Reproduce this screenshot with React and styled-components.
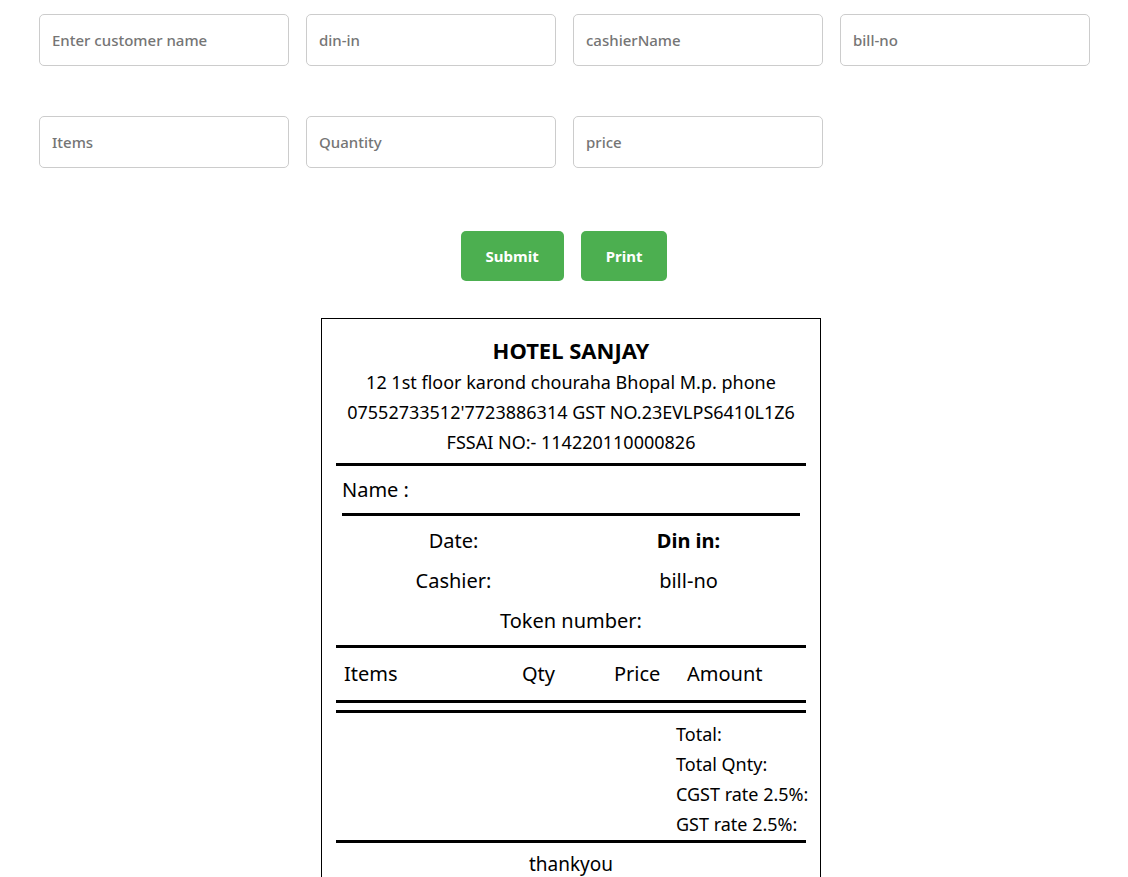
import React from "react";
import styled, { createGlobalStyle } from "styled-components";

const GlobalStyle = createGlobalStyle`
  body {
    margin: 8px;
    font-family: "Noto Sans", "Open Sans", sans-serif;
    background: #fff;
    color: #000;
  }
`;

const Page = styled.div`
  padding-top: 6px;
`;

const FormGrid = styled.div`
  display: grid;
  grid-template-columns: repeat(4, 250px);
  column-gap: 17px;
  row-gap: 50px;
  padding-left: 31px;
`;

const Field = styled.input`
  box-sizing: border-box;
  width: 250px;
  height: 52px;
  padding: 0 12px;
  border: 1px solid #ccc;
  border-radius: 5px;
  font-family: inherit;
  font-size: 15px;
  font-weight: 500;
  outline: none;
  &::placeholder {
    color: #757575;
  }
`;

const ButtonRow = styled.div`
  display: flex;
  justify-content: center;
  gap: 17px;
  margin-top: 63px;
`;

const Button = styled.button`
  height: 50px;
  padding: 0 ${(p) => p.$pad}px;
  border: none;
  border-radius: 5px;
  background: #4caf50;
  color: #fff;
  font-family: inherit;
  font-size: 15px;
  font-weight: 700;
  cursor: pointer;
`;

const ReceiptWrap = styled.div`
  display: flex;
  justify-content: center;
  margin-top: 37px;
  padding-left: 14px;
`;

const Receipt = styled.div`
  box-sizing: border-box;
  width: 500px;
  border: 1px solid #000;
  padding: 16px 14px 20px;
`;

const Title = styled.div`
  text-align: center;
  font-size: 22px;
  font-weight: 700;
  line-height: 30px;
`;

const Address = styled.div`
  text-align: center;
  font-size: 18px;
  line-height: 30px;
  margin-top: 2px;
`;

const Rule = styled.div`
  height: 3px;
  background: #000;
  margin: ${(p) => p.$m || "0"};
`;

const NameRow = styled.div`
  font-size: 20px;
  line-height: 30px;
  padding-left: 6px;
  margin: 9px 0 8px;
`;

const InfoGrid = styled.div`
  display: grid;
  grid-template-columns: 1fr 1fr;
  row-gap: 10px;
  margin: 10px 0 9px;
  font-size: 20px;
  line-height: 30px;
  text-align: center;
`;

const InfoCell = styled.div`
  font-weight: ${(p) => (p.$bold ? 700 : 400)};
  grid-column: ${(p) => (p.$span ? "1 / span 2" : "auto")};
`;

const HeadRow = styled.div`
  display: grid;
  grid-template-columns: 178px 92px 73px auto;
  padding-left: 8px;
  margin: 11px 0 11px;
  font-size: 20px;
  line-height: 30px;
`;

const Totals = styled.div`
  margin: 6px 0 1px 340px;
  font-size: 18px;
  line-height: 30px;
  white-space: nowrap;
`;

const Thanks = styled.div`
  text-align: center;
  font-size: 19px;
  line-height: 30px;
  margin-top: 6px;
`;

export default function App() {
  return (
    <Page>
      <GlobalStyle />
      <FormGrid>
        <Field placeholder="Enter customer name" />
        <Field placeholder="din-in" />
        <Field placeholder="cashierName" />
        <Field placeholder="bill-no" />
        <Field placeholder="Items" />
        <Field placeholder="Quantity" />
        <Field placeholder="price" />
      </FormGrid>
      <ButtonRow>
        <Button $pad={25}>Submit</Button>
        <Button $pad={25}>Print</Button>
      </ButtonRow>
      <ReceiptWrap>
        <Receipt>
          <Title>HOTEL SANJAY</Title>
          <Address>
            12 1st floor karond chouraha Bhopal M.p. phone
            <br />
            07552733512'7723886314 GST NO.23EVLPS6410L1Z6
            <br />
            FSSAI NO:- 114220110000826
          </Address>
          <Rule $m="6px 0 0" />
          <NameRow>Name :</NameRow>
          <Rule $m="0 6px" />
          <InfoGrid>
            <InfoCell>Date:</InfoCell>
            <InfoCell $bold>Din in:</InfoCell>
            <InfoCell>Cashier:</InfoCell>
            <InfoCell>bill-no</InfoCell>
            <InfoCell $span>Token number:</InfoCell>
          </InfoGrid>
          <Rule />
          <HeadRow>
            <span>Items</span>
            <span>Qty</span>
            <span>Price</span>
            <span>Amount</span>
          </HeadRow>
          <Rule />
          <Rule $m="7px 0 0" />
          <Totals>
            Total:
            <br />
            Total Qnty:
            <br />
            CGST rate 2.5%:
            <br />
            GST rate 2.5%:
          </Totals>
          <Rule />
          <Thanks>thankyou</Thanks>
        </Receipt>
      </ReceiptWrap>
    </Page>
  );
}
